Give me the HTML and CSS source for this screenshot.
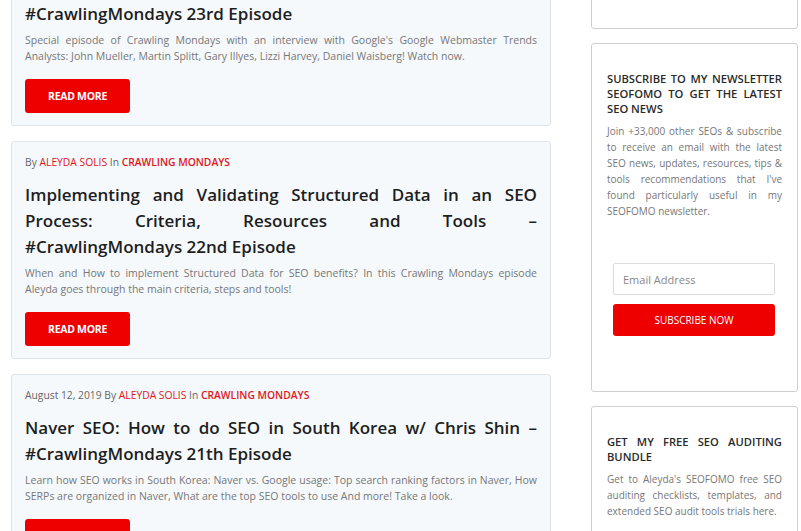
FILE: index.html
```html
<!DOCTYPE html>
<html lang="en">
<head>
  <meta charset="UTF-8" />
  <meta name="viewport" content="width=device-width, initial-scale=1.0" />
  <title>Crawling Mondays</title>
  <link rel="stylesheet" href="styles.css">
</head>
<body>
  <div class="page">
    <main class="posts">
      <article class="post">
        <div class="meta">By <a href="#" class="author">ALEYDA SOLIS</a> In <a href="#" class="cat">CRAWLING MONDAYS</a></div>
        <h2><span class="ep">#CrawlingMondays 23rd Episode</span></h2>
        <p>Special episode of Crawling Mondays with an interview with Google's Google Webmaster Trends Analysts: John Mueller, Martin Splitt, Gary Illyes, Lizzi Harvey, Daniel Waisberg! Watch now.</p>
        <a href="#" class="btn">READ MORE</a>
      </article>
      <article class="post">
        <div class="meta">By <a href="#" class="author">ALEYDA SOLIS</a> In <a href="#" class="cat">CRAWLING MONDAYS</a></div>
        <h2>Implementing and Validating Structured Data in an SEO Process: Criteria, Resources and Tools – <span class="ep">#CrawlingMondays 22nd Episode</span></h2>
        <p>When and How to implement Structured Data for SEO benefits? In this Crawling Mondays episode Aleyda goes through the main criteria, steps and tools!</p>
        <a href="#" class="btn">READ MORE</a>
      </article>
      <article class="post">
        <div class="meta">August 12, 2019 By <a href="#" class="author">ALEYDA SOLIS</a> In <a href="#" class="cat">CRAWLING MONDAYS</a></div>
        <h2>Naver SEO: How to do SEO in South Korea w/ Chris Shin – <span class="ep">#CrawlingMondays 21th Episode</span></h2>
        <p>Learn how SEO works in South Korea: Naver vs. Google usage: Top search ranking factors in Naver, How SERPs are organized in Naver, What are the top SEO tools to use And more! Take a look.</p>
        <a href="#" class="btn">READ MORE</a>
      </article>
    </main>
    <aside class="sidebar">
      <section class="widget widget-top"></section>
      <section class="widget">
        <h3>Subscribe to my newsletter SEOFOMO to get the latest SEO news</h3>
        <p>Join +33,000 other SEOs &amp; subscribe to receive an email with the latest SEO news, updates, resources, tips &amp; tools recommendations that I've found particularly useful in my SEOFOMO newsletter.</p>
        <form class="subscribe">
          <input type="email" placeholder="Email Address">
          <button type="submit">SUBSCRIBE NOW</button>
        </form>
      </section>
      <section class="widget">
        <h3>Get my free SEO auditing bundle</h3>
        <p>Get to Aleyda's SEOFOMO free SEO auditing checklists, templates, and extended SEO audit tools trials here.</p>
      </section>
    </aside>
  </div>
</body>
</html>
```

FILE: styles.css
```css
body {
  margin: 0;
  font-family: "Open Sans", Arial, sans-serif;
  background-color: #fff;
  color: #222;
  overflow: hidden;
}
a {
  text-decoration: none;
}
.page {
  display: flex;
  align-items: flex-start;
  gap: 40px;
  padding: 0 3px 0 11px;
}
.posts {
  width: 540px;
  margin-top: -40px;
  display: flex;
  flex-direction: column;
  gap: 15px;
}
.post {
  background-color: #f5f9fc;
  border: 1px solid #dfe4e8;
  border-radius: 3px;
  padding: 14px 13px 12px;
}
.meta {
  font-size: 10.3px;
  line-height: 12px;
  color: #666;
}
.meta .author {
  color: #e0161b;
}
.meta .cat {
  color: #e0161b;
  font-weight: 600;
}
.post h2 {
  margin: 14px 0 5px;
  font-size: 17px;
  line-height: 26px;
  font-weight: 600;
  color: #1e1e1e;
  text-align: justify;
}
/* keep the episode tag on one line, as the theme wraps it */
.post h2 .ep {
  white-space: nowrap;
}
.post p {
  margin: 0 0 15px;
  font-size: 10.5px;
  line-height: 16px;
  color: #777;
  text-align: justify;
}
.btn {
  display: block;
  width: 105px;
  height: 34px;
  line-height: 34px;
  text-align: center;
  background-color: #ee0000;
  color: #fff;
  font-size: 10.5px;
  font-weight: 700;
  letter-spacing: -0.3px;
  border-radius: 3px;
}
.sidebar {
  width: 207px;
  margin-top: -73px;
  display: flex;
  flex-direction: column;
  gap: 14px;
}
.widget {
  background-color: #fff;
  border: 1px solid #cfcfcf;
  border-radius: 3px;
  padding: 27px 15px 55px;
}
.widget-top {
  height: 100px;
  padding: 0;
}
.widget h3 {
  margin: 0 0 7px;
  font-size: 11.2px;
  line-height: 15px;
  font-weight: 600;
  text-transform: uppercase;
  text-align: justify;
  color: #2a2a2a;
}
.widget p {
  margin: 0;
  font-size: 10px;
  line-height: 16px;
  color: #777;
  text-align: justify;
}
.subscribe {
  margin: 44px 7px 0 6px;
  display: flex;
  flex-direction: column;
  gap: 9px;
}
.subscribe input {
  height: 32px;
  box-sizing: border-box;
  border: 1px solid #ddd;
  border-radius: 2px;
  padding: 0 9px;
  font-family: inherit;
  font-size: 11px;
  color: #333;
}
.subscribe input::placeholder {
  color: #888;
}
.subscribe button {
  height: 32px;
  border: none;
  border-radius: 3px;
  background-color: #ee0000;
  color: #fff;
  font-family: inherit;
  font-size: 10px;
  font-weight: 500;
}
```
